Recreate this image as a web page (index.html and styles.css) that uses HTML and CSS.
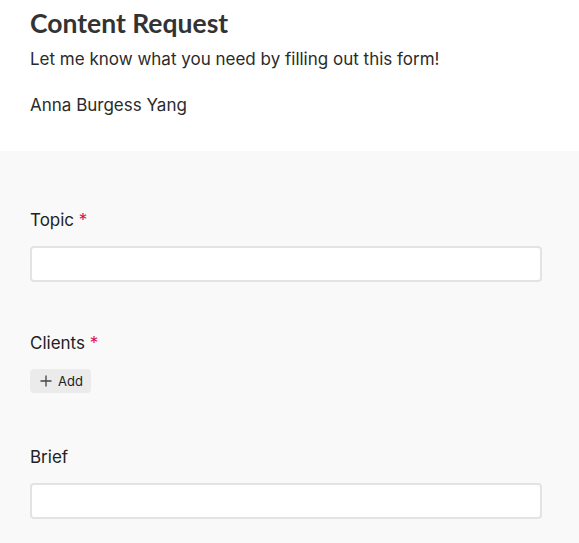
FILE: index.html
```html
<!DOCTYPE html>
<html>
<head>
<meta charset="utf-8">
<link rel="stylesheet" href="styles.css">
</head>
<body>
<header class="head">
  <h1 class="title">Content Request</h1>
  <p class="desc">Let me know what you need by filling out this form!</p>
  <p class="author">Anna Burgess Yang</p>
</header>
<main class="form">
  <div class="field">
    <div class="label">Topic <span class="req">*</span></div>
    <div class="input"></div>
  </div>
  <div class="field field-clients">
    <div class="label">Clients <span class="req">*</span></div>
    <button class="add"><svg width="12" height="12" viewBox="0 0 12 12"><path d="M6 0.5V11.5M0.5 6H11.5" stroke="#444" stroke-width="1.3" fill="none"/></svg>Add</button>
  </div>
  <div class="field">
    <div class="label">Brief</div>
    <div class="input"></div>
  </div>
</main>
</body>
</html>
```
FILE: styles.css
```css
html, body {
  margin: 0;
  padding: 0;
  background: #fff;
}
body {
  font-family: Inter, "Noto Sans", sans-serif;
  color: #2b2b2b;
}
.head {
  padding: 6px 30px 35px;
}
.title {
  font-family: Lato, sans-serif;
  font-weight: 700;
  font-size: 26.5px;
  line-height: 34px;
  margin: 0;
  color: #333;
}
.desc {
  font-size: 17px;
  line-height: 22px;
  margin: 8px 0 0;
}
.author {
  font-size: 17px;
  line-height: 22px;
  margin: 24px 0 0;
}
.form {
  background: #f9f9f9;
  padding: 57px 37px 30px 30px;
}
.field {
  display: flex;
  flex-direction: column;
  align-items: stretch;
  margin-bottom: 49px;
}
.field-clients {
  align-items: flex-start;
  margin-bottom: 52px;
}
.label {
  font-size: 17px;
  line-height: 24px;
  color: #222;
  margin-bottom: 14px;
}
.req {
  color: #e0103e;
}
.input {
  height: 32px;
  background: #fff;
  border: 2px solid #e3e3e3;
  border-radius: 4px;
}
.add {
  display: flex;
  align-items: center;
  gap: 6px;
  height: 24px;
  padding: 0 8px 0 10px;
  border: none;
  border-radius: 4px;
  background: #ebebeb;
  font-family: Inter, sans-serif;
  font-size: 13px;
  color: #222;
}
```
